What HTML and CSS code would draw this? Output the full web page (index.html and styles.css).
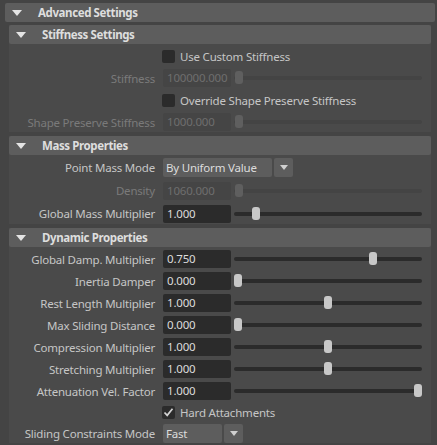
FILE: index.html
```html
<!DOCTYPE html>
<html>
<head>
<meta charset="utf-8">
<link rel="stylesheet" href="styles.css">
</head>
<body>
<div class="editor">
  <section class="frame top">
    <div class="hdr"><span class="tri"></span><span class="title">Advanced Settings</span></div>
    <div class="frame-body">

      <section class="frame sub">
        <div class="hdr"><span class="tri"></span><span class="title">Stiffness Settings</span></div>
        <div class="rows stiff">
          <div class="row check-row"><span class="box"></span><span class="check-text">Use Custom Stiffness</span></div>
          <div class="row disabled"><span class="label">Stiffness</span><span class="field">100000.000</span><div class="slider"><div class="track"></div><span class="handle" style="left:1px"></span></div></div>
          <div class="row check-row"><span class="box"></span><span class="check-text">Override Shape Preserve Stiffness</span></div>
          <div class="row disabled"><span class="label">Shape Preserve Stiffness</span><span class="field">1000.000</span><div class="slider"><div class="track"></div><span class="handle" style="left:1px"></span></div></div>
        </div>
      </section>

      <section class="frame sub">
        <div class="hdr"><span class="tri"></span><span class="title">Mass Properties</span></div>
        <div class="rows mass">
          <div class="row"><span class="label">Point Mass Mode</span><span class="drop wide">By Uniform Value</span><span class="drop-btn"><span class="arrow"></span></span></div>
          <div class="row disabled"><span class="label">Density</span><span class="field">1060.000</span><div class="slider"><div class="track"></div><span class="handle" style="left:1px"></span></div></div>
          <div class="row"><span class="label">Global Mass Multiplier</span><span class="field">1.000</span><div class="slider"><div class="track"></div><span class="handle" style="left:18px"></span></div></div>
        </div>
      </section>

      <section class="frame sub">
        <div class="hdr"><span class="tri"></span><span class="title">Dynamic Properties</span></div>
        <div class="rows dyn">
          <div class="row"><span class="label">Global Damp. Multiplier</span><span class="field">0.750</span><div class="slider"><div class="track"></div><span class="handle" style="left:135px"></span></div></div>
          <div class="row"><span class="label">Inertia Damper</span><span class="field">0.000</span><div class="slider"><div class="track"></div><span class="handle" style="left:0px"></span></div></div>
          <div class="row"><span class="label">Rest Length Multiplier</span><span class="field">1.000</span><div class="slider"><div class="track"></div><span class="handle" style="left:90px"></span></div></div>
          <div class="row"><span class="label">Max Sliding Distance</span><span class="field">0.000</span><div class="slider"><div class="track"></div><span class="handle" style="left:0px"></span></div></div>
          <div class="row"><span class="label">Compression Multiplier</span><span class="field">1.000</span><div class="slider"><div class="track"></div><span class="handle" style="left:90px"></span></div></div>
          <div class="row"><span class="label">Stretching Multiplier</span><span class="field">1.000</span><div class="slider"><div class="track"></div><span class="handle" style="left:90px"></span></div></div>
          <div class="row"><span class="label">Attenuation Vel. Factor</span><span class="field">1.000</span><div class="slider"><div class="track"></div><span class="handle" style="left:180px"></span></div></div>
          <div class="row check-row short"><span class="box checked"><svg width="13" height="13" viewBox="0 0 13 13"><polyline points="2.5,6.5 5.2,9.4 10.5,2.8" fill="none" stroke="#d2d2d2" stroke-width="1.7"/></svg></span><span class="check-text">Hard Attachments</span></div>
          <div class="row"><span class="label">Sliding Constraints Mode</span><span class="drop narrow">Fast</span><span class="drop-btn"><span class="arrow"></span></span></div>
        </div>
      </section>

    </div>
  </section>
</div>
</body>
</html>
```
FILE: styles.css
```css
html, body {
  margin: 0;
  padding: 0;
  background: #444444;
}
body {
  width: 437px;
  height: 445px;
  overflow: hidden;
  font-family: "Noto Sans", "Open Sans", sans-serif;
  font-size: 11.5px;
  letter-spacing: -0.2px;
  color: #c6c6c6;
}
.editor {
  padding: 3px 2px 0 5px;
}
.frame.top {
  width: 430px;
}
.hdr {
  height: 19px;
  background: #5d5d5d;
  border-radius: 2px;
  display: flex;
  align-items: center;
  position: relative;
}
.tri {
  width: 0;
  height: 0;
  margin-left: 7px;
  border-left: 5px solid transparent;
  border-right: 5px solid transparent;
  border-top: 6px solid #e4e4e4;
}
.title {
  margin-left: 16px;
  font-weight: bold;
  letter-spacing: -0.4px;
  color: #dedede;
  line-height: 19px;
}
.frame-body {
  padding: 3px 4px 0 4px;
  display: flex;
  flex-direction: column;
  gap: 4px;
}
.frame.sub {
  display: flex;
  flex-direction: column;
  gap: 2px;
  background: #4a4a4a;
}
.rows {
  display: flex;
  flex-direction: column;
  gap: 2px;
}
.row {
  display: flex;
  align-items: center;
  height: 20px;
}
.mass .row { height: 21px; }
.row.short { height: 18px; }
.label {
  width: 146px;
  flex: none;
  text-align: right;
  white-space: nowrap;
  color: #c6c6c6;
}
.field {
  flex: none;
  margin-left: 8px;
  width: 64px;
  height: 18px;
  line-height: 18px;
  padding-left: 4px;
  background: #2b2b2b;
  border-radius: 2px;
  color: #dcdcdc;
  overflow: hidden;
  white-space: nowrap;
}
.slider {
  position: relative;
  margin-left: 3px;
  width: 188px;
  height: 14px;
  flex: none;
}
.track {
  position: absolute;
  left: 0;
  right: 0;
  top: 5px;
  height: 4px;
  border-radius: 2px;
  background: #2b2b2b;
}
.handle {
  position: absolute;
  top: 0;
  width: 8px;
  height: 13px;
  border-radius: 3px;
  background: #c8c8c8;
}
.disabled .label { color: #7a7a7a; }
.disabled .field { background: #454545; color: #6e6e6e; }
.disabled .track { background: #444444; }
.disabled .handle { background: #5f5f5f; }

.check-row .box {
  margin-left: 153px;
  width: 13px;
  height: 13px;
  border-radius: 2px;
  background: #2b2b2b;
  flex: none;
  display: flex;
}
.check-text {
  margin-left: 5px;
  color: #c6c6c6;
  white-space: nowrap;
}
.drop {
  flex: none;
  margin-left: 8px;
  height: 19px;
  line-height: 19px;
  padding-left: 3px;
  background: #5d5d5d;
  border-radius: 2px;
  color: #dcdcdc;
  white-space: nowrap;
}
.drop.wide { width: 106px; }
.drop.narrow { width: 56px; }
.drop-btn {
  flex: none;
  margin-left: 2px;
  width: 19px;
  height: 19px;
  background: #5d5d5d;
  border-radius: 2px;
  display: flex;
  align-items: center;
  justify-content: center;
}
.arrow {
  width: 0;
  height: 0;
  border-left: 4.5px solid transparent;
  border-right: 4.5px solid transparent;
  border-top: 5px solid #cfcfcf;
}
```
